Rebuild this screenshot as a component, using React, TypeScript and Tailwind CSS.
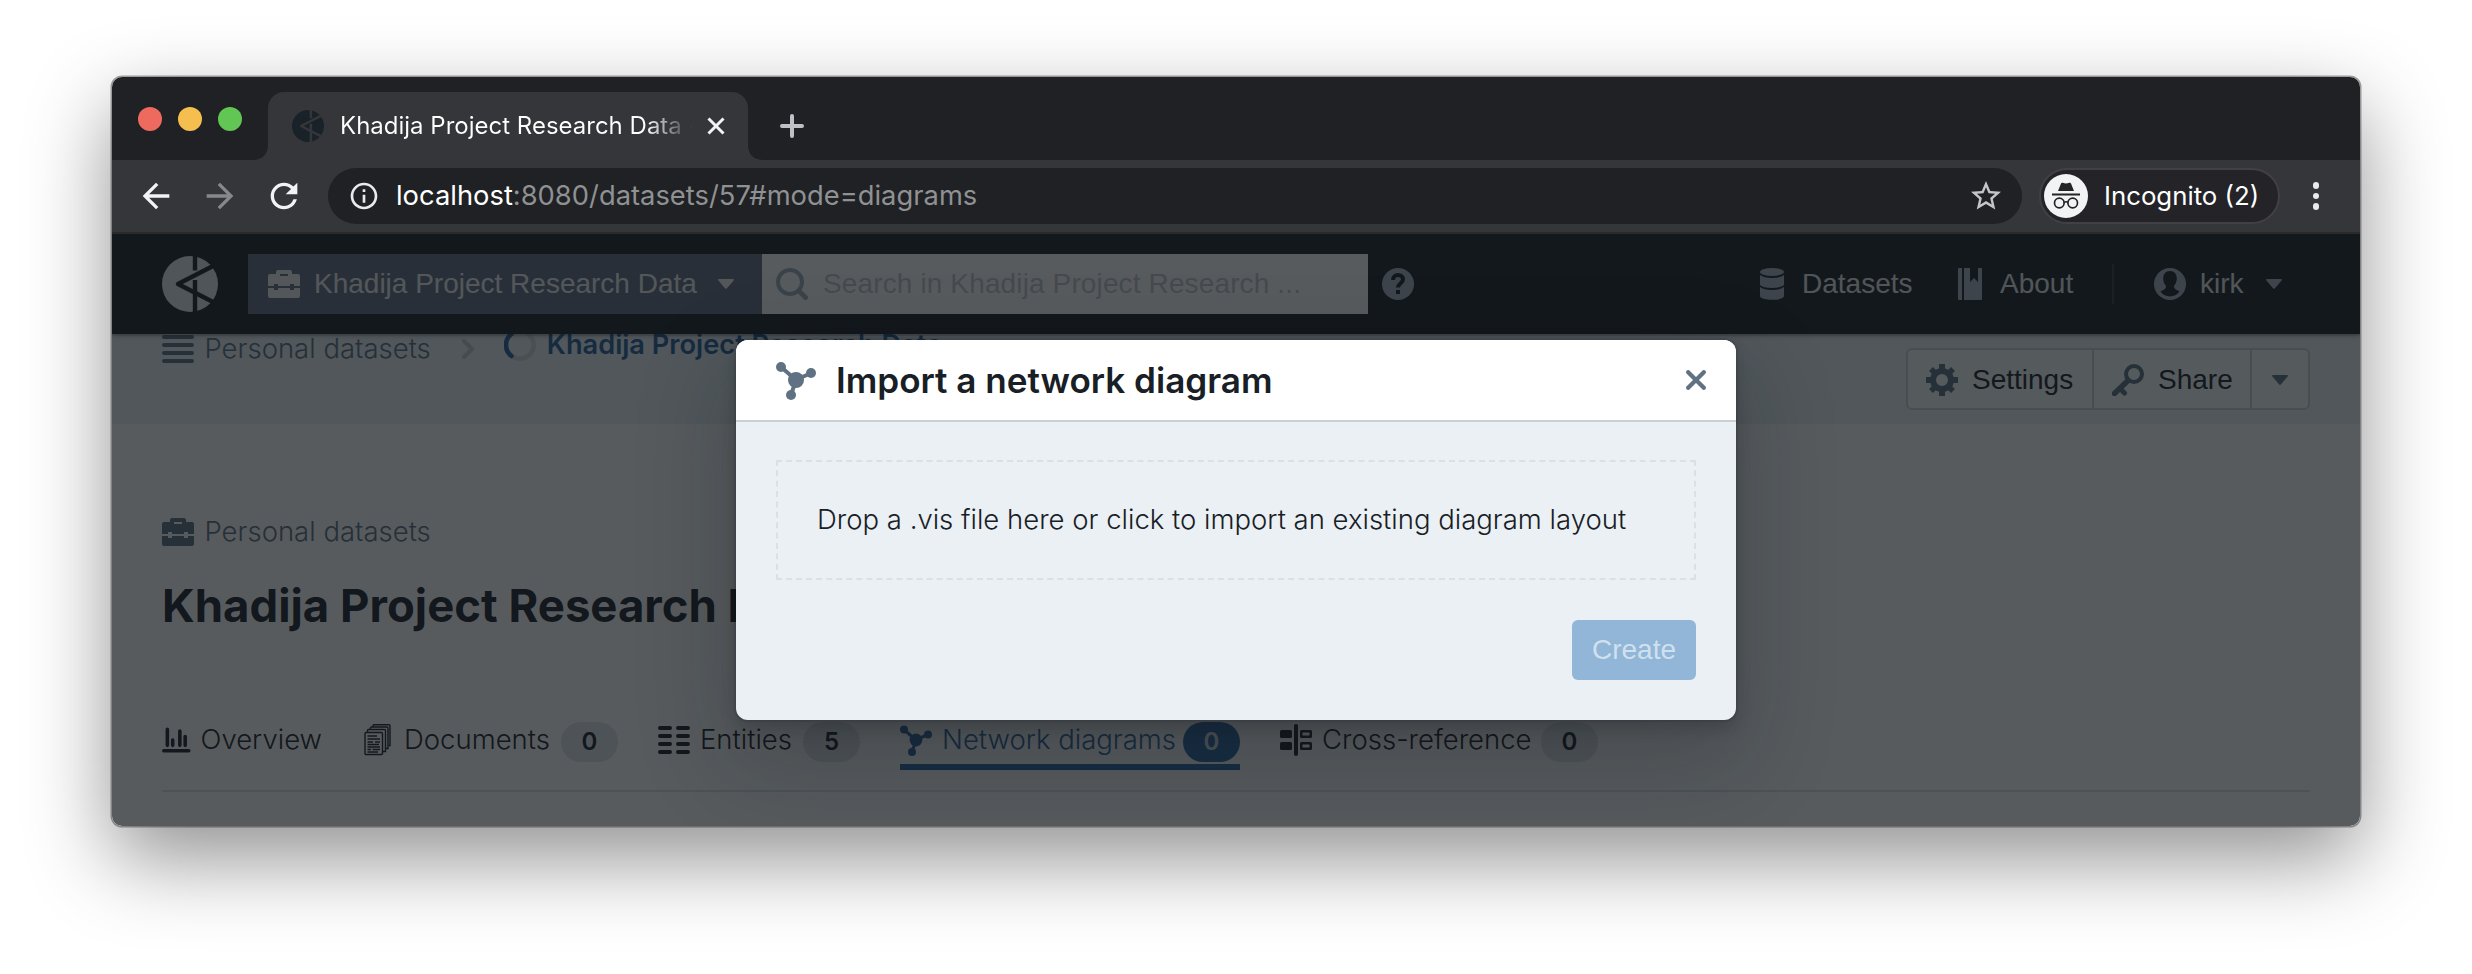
import type { ReactNode } from "react";
import { MdArrowBack, MdArrowForward, MdInfoOutline, MdRefresh, MdStarBorder } from "react-icons/md";

type IconProps = { className?: string };

function Logo({ className = "" }: IconProps) {
  return (
    <svg viewBox="0 0 56 56" className={className}>
      <circle cx="28" cy="28" r="28" className="fill-current" />
      <g fill="none" strokeWidth="4.4" className="stroke-(--cut)">
        <path d="M33 0V14.5M33 24V56" />
        <path d="M52 9.500L16 28L52 46.500" strokeLinejoin="round" />
      </g>
    </svg>
  );
}

function Briefcase({ className = "" }: IconProps) {
  return (
    <svg viewBox="0 0 32 32" className={className} fill="currentColor">
      <path fillRule="evenodd" d="M2 6H8V4Q8 2 10 2H22Q24 2 24 4V6H30Q32 6 32 8V18H26V16H22V18H10V16H6V18H0V8Q0 6 2 6ZM12 6H20V8H12Z" />
      <path d="M0 20H6V22H10V20H22V22H26V20H32V28Q32 30 30 30H2Q0 30 0 28Z" />
    </svg>
  );
}

function Graph({ className = "" }: IconProps) {
  return (
    <svg viewBox="0 0 40 40" className={className} fill="currentColor">
      <path d="M5 7L20 20L35 13M20 20L15 35" fill="none" stroke="currentColor" strokeWidth="4" />
      <circle cx="5" cy="7" r="5" />
      <circle cx="35" cy="13" r="5" />
      <circle cx="20" cy="20" r="8" />
      <circle cx="15" cy="35" r="5" />
    </svg>
  );
}

function SearchIcon({ className = "" }: IconProps) {
  return (
    <svg viewBox="0 0 32 32" className={className} fill="none" stroke="currentColor">
      <circle cx="14" cy="14" r="12" strokeWidth="4" />
      <path d="M23 23L29.500 29.500" strokeWidth="5" strokeLinecap="round" />
    </svg>
  );
}

function Help({ className = "" }: IconProps) {
  return (
    <svg viewBox="0 0 32 32" className={className}>
      <circle cx="16" cy="16" r="16" fill="currentColor" />
      <path d="M11 12C11 5.500 21 5.500 21 11.500C21 15 16 15.500 16 19.500" fill="none" stroke="#1b2025" strokeWidth="4" />
      <path d="M14 22H18V26H14Z" fill="#1b2025" />
    </svg>
  );
}

function DatabaseIcon({ className = "" }: IconProps) {
  return (
    <svg viewBox="0 0 32 32" className={className} fill="currentColor">
      <ellipse cx="16" cy="4" rx="12" ry="4" />
      <path d="M4 7Q8 10 16 10T28 7V17Q25 20 16 20T4 17Z" />
      <path d="M4 19Q8 22 16 22T28 19V28C28 33 4 33 4 28Z" />
    </svg>
  );
}

function Manual({ className = "" }: IconProps) {
  return (
    <svg viewBox="0 0 32 32" className={className} fill="currentColor">
      <path d="M5 0H8V32H5Q4 32 4 31V1Q4 0 5 0Z" />
      <path d="M10 0H16V14L20 10L24 14V0H27Q28 0 28 1V31Q28 32 27 32H10Z" />
    </svg>
  );
}

function UserIcon({ className = "" }: IconProps) {
  return (
    <svg viewBox="0 0 32 32" className={className}>
      <circle cx="16" cy="16" r="16" fill="currentColor" />
      <path
        d="M16 3C20.500 3 23 6.500 22.800 11C22.700 14 21.500 16 20 18C20 21 22 21.500 25.500 23.500C21 30 11 30 6.500 23.500C10 21.500 12 21 12 18C10.500 16 9.300 14 9.200 11C9 6.500 11.500 3 16 3Z"
        fill="#1b2025"
      />
    </svg>
  );
}

function Caret({ className = "" }: IconProps) {
  return (
    <svg viewBox="0 0 16 10" className={className} fill="currentColor">
      <path d="M1 0H15Q16.500 0 15.600 1.400L9 9.300Q8 10.400 7 9.300L0.400 1.400Q-0.500 0 1 0Z" />
    </svg>
  );
}

function Cog({ className = "" }: IconProps) {
  return (
    <svg viewBox="0 0 32 32" className={className} fill="none" stroke="currentColor">
      <circle cx="16" cy="16" r="9" strokeWidth="6" />
      <path d="M16 0V6M16 26V32M0 16H6M26 16H32" strokeWidth="6" />
      <path d="M5 5L9 9M23 23L27 27M27 5L23 9M9 23L5 27" strokeWidth="5.500" />
    </svg>
  );
}

function Key({ className = "" }: IconProps) {
  return (
    <svg viewBox="0 0 32 32" className={className} fill="none" stroke="currentColor">
      <circle cx="22" cy="10" r="8" strokeWidth="4" />
      <path d="M15.500 17L2.500 29.500" strokeWidth="5.500" strokeLinecap="round" />
      <path d="M8 24.500L12.500 29" strokeWidth="5" strokeLinecap="round" />
    </svg>
  );
}

function Menu({ className = "" }: IconProps) {
  return (
    <svg viewBox="0 0 32 32" className={className} stroke="currentColor" strokeWidth="4" strokeLinecap="round">
      <path d="M2 4H30M2 12H30M2 20H30M2 28H30" />
    </svg>
  );
}

function Chart({ className = "" }: IconProps) {
  return (
    <svg viewBox="0 0 32 32" className={className} stroke="currentColor" strokeWidth="4" strokeLinecap="round">
      <path d="M2 28H30M6 4V22M12 16V22M20 6V22M26 12V22" />
    </svg>
  );
}

function DocumentsIcon({ className = "" }: IconProps) {
  return (
    <svg viewBox="0 0 32 32" className={className} fill="none" stroke="currentColor" strokeWidth="1.400">
      <rect x="3" y="8.500" width="17.500" height="22" rx="1" />
      <path d="M5.500 8V6.500Q5.500 5.500 6.500 5.500H22.500Q23.500 5.500 23.500 6.500V27.500H21" />
      <path d="M8.500 5.500V4Q8.500 3 9.500 3H25Q26 3 26 4V24.500H24" />
      <path d="M11 3V1.700Q11 0.700 12 0.700H27Q28 0.700 28 1.700V21.500H26.500" />
      <path d="M5.500 12H15M5.500 15H18M5.500 18H11M13 18H18M5.500 20.500H17M5.500 23H18M5.500 25.500H9M10.500 25.500H18M5.500 28H16" />
    </svg>
  );
}

function Columns({ className = "" }: IconProps) {
  return (
    <svg viewBox="0 0 32 32" className={className} stroke="currentColor" strokeWidth="4" strokeLinecap="round">
      <path d="M2 4H12M20 4H30M2 12H12M20 12H30M2 20H12M20 20H30M2 28H12M20 28H30" />
    </svg>
  );
}

function Comparison({ className = "" }: IconProps) {
  return (
    <svg viewBox="0 0 32 32" className={className} fill="currentColor">
      <rect x="0" y="6" width="12" height="8" rx="1.500" />
      <rect x="0" y="18" width="12" height="8" rx="1.500" />
      <rect x="14" y="0" width="4" height="32" rx="2" />
      <path fillRule="evenodd" d="M21.500 6H30.500Q32 6 32 7.500V12.500Q32 14 30.500 14H21.500Q20 14 20 12.500V7.500Q20 6 21.500 6ZM22.500 8.500V11.500H29.500V8.500Z" />
      <path fillRule="evenodd" d="M21.500 18H30.500Q32 18 32 19.500V24.500Q32 26 30.500 26H21.500Q20 26 20 24.500V19.500Q20 18 21.500 18ZM22.500 20.500V23.500H29.500V20.500Z" />
    </svg>
  );
}

function TabStrip() {
  return (
    <div className="flex h-[83px] items-end bg-[#202124] pl-[26px]">
      <div className="mb-[29px] flex gap-4">
        <span className="size-6 rounded-full bg-[#ee6a5f]" />
        <span className="size-6 rounded-full bg-[#f5bf4f]" />
        <span className="size-6 rounded-full bg-[#62c655]" />
      </div>
      <svg viewBox="0 0 16 16" className="ml-[10px] size-4 fill-[#35363a]">
        <path d="M16 0V16H0Q16 16 16 0Z" />
      </svg>
      <div className="flex h-[68px] w-[480px] items-center rounded-t-[16px] bg-[#35363a] pl-6 font-[Inter,sans-serif]">
        <Logo className="size-8 text-[#1a2229] [--cut:#35363a]" />
        <div className="ml-[16px] w-[356px] bg-linear-to-r from-white from-86% to-[#35363a] to-99% bg-clip-text text-[24px] whitespace-nowrap text-transparent">
          Khadija Project Research Data -
        </div>
        <svg viewBox="0 0 18 18" className="ml-[11px] size-[18px]" stroke="#f1f3f4" strokeWidth="3">
          <path d="M1.500 1.500L16.500 16.500M16.500 1.500L1.500 16.500" />
        </svg>
      </div>
      <svg viewBox="0 0 16 16" className="size-4 fill-[#35363a]">
        <path d="M0 0V16H16Q0 16 0 0Z" />
      </svg>
      <svg viewBox="0 0 24 24" className="mb-[22px] ml-4 size-6" stroke="#bdc1c6" strokeWidth="4" strokeLinecap="round">
        <path d="M12 2V22M2 12H22" />
      </svg>
    </div>
  );
}

function Toolbar() {
  return (
    <div className="flex h-[74px] items-center border-b-2 border-[#2a2a28] bg-[#35363a] pl-6 font-[Inter,sans-serif]">
      <div className="flex gap-6 text-[40px] text-[#f1f3f4]">
        <MdArrowBack />
        <MdArrowForward className="text-[#86888a]" />
        <MdRefresh />
      </div>
      <div className="ml-6 flex h-14 w-[1694px] items-center rounded-full bg-[#202124] pr-[18px] pl-5">
        <MdInfoOutline className="text-[32px] text-[#e8eaed]" />
        <span className="ml-[16px] text-[27.35px] text-[#8f9193]">
          <span className="text-white">localhost</span>:8080/datasets/57#mode=diagrams
        </span>
        <MdStarBorder className="ml-auto text-[36px] text-[#c4c5c7]" />
      </div>
      <div className="ml-[17px] flex h-14 w-[241px] items-center rounded-full border-2 border-[#404045] bg-[#232328] pl-[3px]">
        <svg viewBox="0 0 44 44" className="size-11">
          <circle cx="22" cy="22" r="22" fill="#f1f3f4" />
          <path d="M14 17L17 9.500Q17.500 8.300 18.800 8.800Q22 10 25.200 8.800Q26.500 8.300 27 9.500L30 17Z" fill="#232328" />
          <path d="M8 20.500H36" stroke="#232328" strokeWidth="2" />
          <g fill="none" stroke="#232328" strokeWidth="1.700">
            <circle cx="15.300" cy="29" r="4.800" />
            <circle cx="28.700" cy="29" r="4.800" />
            <path d="M20 28.500Q22 27 24 28.500" />
          </g>
        </svg>
        <span className="ml-[16px] text-[25.8px] whitespace-nowrap text-white">Incognito (2)</span>
      </div>
      <div className="ml-[32.5px] flex flex-col gap-1 *:size-[6.500px] *:rounded-full *:bg-[#e8eaed]">
        <span />
        <span />
        <span />
      </div>
    </div>
  );
}

function NavBar() {
  return (
    <div className="relative z-[1] flex h-[100px] shrink-0 items-center bg-[#1b2025] pr-[78px] pl-[50px] font-[Liberation_Sans,sans-serif] text-[28px] shadow-[0_0_0_2px_rgba(16,22,26,0.1),0_2px_4px_rgba(16,22,26,0.3)]">
      <Logo className="size-14 text-[#e4e9ec] [--cut:#1b2025]" />
      <div className="ml-[30px] flex h-[60px] w-[514px] items-center bg-[#616c7f] pl-5 text-[#f2f2f2]">
        <Briefcase className="size-8" />
        <span className="ml-[14px]">Khadija Project Research Data</span>
        <Caret className="ml-[21px] h-[10px] w-4" />
      </div>
      <div className="flex h-[60px] w-[606px] items-center bg-white pl-[14px] text-[#c3c7ca]">
        <SearchIcon className="size-8 text-[#a2aebb]" />
        <span className="ml-[15px] tracking-[0.13px]">Search in Khadija Project Research ...</span>
      </div>
      <Help className="ml-[14px] size-8 text-[#a9b2c0]" />
      <div className="ml-auto flex items-center text-[#e9ebec]">
        <div className="flex w-[198px] items-center gap-[14px]">
          <DatabaseIcon className="size-8 text-[#a9b2c0]" />
          Datasets
        </div>
        <div className="flex w-[158px] items-center gap-[14px]">
          <Manual className="size-8 text-[#a9b2c0]" />
          About
        </div>
        <div className="h-10 w-[2px] bg-[#353a40]" />
        <div className="ml-10 flex w-32 items-center">
          <UserIcon className="size-8 text-[#a9b2c0]" />
          <span className="ml-[14px]">kirk</span>
          <Caret className="ml-auto h-[10px] w-4 text-[#a9b2c0]" />
        </div>
      </div>
    </div>
  );
}

function SubHeader() {
  return (
    <div className="flex h-[90px] shrink-0 items-start bg-[#ebf0f3] pr-[50px] pl-[50px] text-[27.5px] font-light text-[#5c7080]">
      <div className="flex h-[30px] items-center">
        <Menu className="size-8" />
        <span className="ml-[10.5px]">Personal datasets</span>
      </div>
      <svg viewBox="0 0 12 20" className="mt-[5px] ml-[31px] h-5 w-3" fill="none" stroke="#c2c9ce" strokeWidth="4" strokeLinecap="round" strokeLinejoin="round">
        <path d="M2 2L10 10L2 18" />
      </svg>
      <svg viewBox="0 0 32 32" className="-mt-[5px] ml-[30px] size-8" fill="none" strokeWidth="4.500" strokeLinecap="round">
        <circle cx="16" cy="16" r="13.700" stroke="#d2d7db" />
        <path d="M7.500 5A13.700 13.700 0 0 0 7.500 27" stroke="#265f9a" />
      </svg>
      <span className="ml-[11px] text-[27.2px] leading-[22px] font-semibold text-[#265f9a]">Khadija Project Research Data</span>
      <div className="mt-[14px] ml-auto flex h-[62px] items-stretch divide-x-2 divide-[#cbd0d4] rounded-[6px] border-2 border-[#cbd0d4] bg-[#f9fafb] font-[Liberation_Sans,sans-serif] text-[28px] font-normal text-[#182026]">
        <div className="flex w-[186px] items-center pt-[2px] pl-[18px]">
          <Cog className="size-8 text-[#5c7080]" />
          <span className="ml-[14px]">Settings</span>
        </div>
        <div className="flex w-[158px] items-center pt-[2px] pl-[18px]">
          <Key className="size-8 text-[#5c7080]" />
          <span className="ml-[14px]">Share</span>
        </div>
        <div className="flex w-14 items-center justify-center pt-[2px]">
          <Caret className="h-[10px] w-4 text-[#5c7080]" />
        </div>
      </div>
    </div>
  );
}

function Tab({ icon, label, count, width, active = false }: { icon: ReactNode; label: string; count?: number; width: string; active?: boolean }) {
  return (
    <div className={`flex h-[60px] items-center ${width} ${active ? "border-b-[6px] border-[#2a67a5] pt-[6px] text-[#2a639c]" : "text-[#182026]"}`}>
      {icon}
      <span className="ml-[10px] whitespace-nowrap">{label}</span>
      {count !== undefined && (
        <span className={`mt-[4px] ml-auto flex h-10 w-[57px] items-center justify-center rounded-full text-[24px] font-semibold ${active ? "bg-[#2a67a5] text-[#d9dee4]" : "bg-[#e2e4e8] text-[#182026]"}`}>
          {count}
        </span>
      )}
    </div>
  );
}

function Dataset() {
  return (
    <div className="flex grow flex-col bg-white px-[50px] pt-[93px] text-[27.5px] font-light">
      <div className="flex h-[30px] items-center text-[#5c7080]">
        <Briefcase className="size-8" />
        <span className="ml-[10.5px]">Personal datasets</span>
      </div>
      <h1 className="mt-[29px] h-[60px] text-[45.5px] leading-[60px] font-bold text-[#182026]">Khadija Project Research Data</h1>
      <div className="mt-[74px] flex h-[82px] items-start gap-10 border-b-2 border-[#dcdfe3]">
        <Tab icon={<Chart className="size-8" />} label="Overview" width="w-[160px]" />
        <Tab icon={<DocumentsIcon className="size-8" />} label="Documents" count={0} width="w-[256px]" />
        <Tab icon={<Columns className="size-8" />} label="Entities" count={5} width="w-[202px]" />
        <Tab icon={<Graph className="size-8" />} label="Network diagrams" count={0} width="w-[340px]" active />
        <Tab icon={<Comparison className="size-8" />} label="Cross-reference" count={0} width="w-[318px]" />
      </div>
    </div>
  );
}

function ImportDialog() {
  return (
    <div className="h-[380px] w-[1000px] overflow-hidden rounded-[12px] bg-[#ebf0f4]">
      <div className="flex h-[82px] items-center border-b-2 border-[#c9cfd3] bg-white pr-[30px] pl-10">
        <Graph className="size-10 text-[#5f7182]" />
        <h4 className="ml-5 grow text-[35.1px] font-semibold text-[#182026]">Import a network diagram</h4>
        <svg viewBox="0 0 20 20" className="size-5" stroke="#5f7182" strokeWidth="4.200" strokeLinecap="round">
          <path d="M2.200 2.200L17.800 17.800M17.800 2.200L2.200 17.800" />
        </svg>
      </div>
      <div className="flex flex-col items-end px-10 pt-[38px]">
        <div className="flex h-[120px] w-full items-center border-2 border-dashed border-[#dbe0e4] pl-[39px] text-[27.5px] font-light text-[#182026]">
          Drop a .vis file here or click to import an existing diagram layout
        </div>
        <div className="mt-10 flex h-[60px] w-[124px] items-center justify-center rounded-[6px] bg-[#91b6d8] font-[Liberation_Sans,sans-serif] text-[28px] text-[#d0e0ee]">
          Create
        </div>
      </div>
    </div>
  );
}

export default function App() {
  return (
    <div className="h-[974px] w-[2472px] overflow-hidden bg-white pt-[77px] pl-[112px]">
      <div className="h-[749px] w-[2248px] rounded-[10px] shadow-[0_0_0_1.5px_rgba(0,0,0,0.35),0_32px_84px_rgba(0,0,0,0.44)]">
        <div className="flex h-full flex-col overflow-hidden rounded-[10px]">
          <TabStrip />
          <Toolbar />
          <div className="relative flex grow flex-col overflow-hidden font-[Inter,sans-serif]">
            <NavBar />
            <SubHeader />
            <Dataset />
            <div className="absolute inset-0 z-10 flex items-start justify-center bg-[rgba(16,22,26,0.7)] pt-[106px]">
              <div className="rounded-[12px] shadow-[0_0_0_2px_rgba(16,22,26,0.1),0_8px_16px_rgba(16,22,26,0.2),0_36px_92px_12px_rgba(16,22,26,0.2)]">
                <ImportDialog />
              </div>
            </div>
          </div>
        </div>
      </div>
    </div>
  );
}
